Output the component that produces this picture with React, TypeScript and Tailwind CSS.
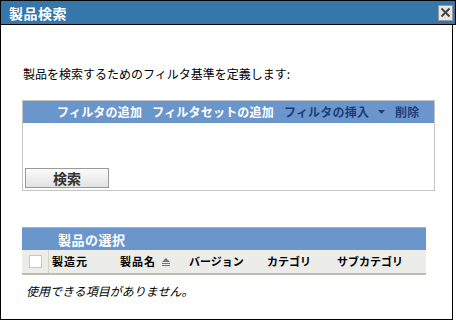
import React from "react";

const jp = { fontFamily: '"MS UI Gothic", "Noto Sans CJK JP", sans-serif' };

export default function App() {
  return (
    <div className="w-[456px] h-[320px] bg-white relative overflow-hidden" style={jp}>
      <div className="flex h-[25px] w-[456px] items-center justify-between border-t border-r border-l border-b border-black bg-[#3576ab] pl-[8px] pr-[2px]">
        <span className="text-[14px] font-bold leading-none tracking-[0.5px] text-white">製品検索</span>
        <div className="flex h-[16px] w-[15px] items-center justify-center border border-[#9a9a9a] bg-[#e6e6e6]">
          <svg width="11" height="11" viewBox="0 0 11 11">
            <path d="M1.5 1.5 L9.5 9.5 M9.5 1.5 L1.5 9.5" stroke="#444" strokeWidth="2" />
          </svg>
        </div>
      </div>
      <div className="flex h-[295px] w-[453px] flex-col border-l border-r border-b border-black">
        <div className="mt-[42px] pl-[22px] text-[12px] leading-[14px] text-black">
          製品を検索するためのフィルタ基準を定義します:
        </div>
        <div className="ml-[21px] mt-[19px] flex h-[91px] w-[413px] flex-col border border-[#c4c4c4]">
          <div className="flex h-[22px] items-center bg-[#6b96cc] pl-[34px] text-[12px] font-bold leading-none tracking-[0.2px]">
            <span className="text-white">フィルタの追加</span>
            <span className="ml-[10px] text-white">フィルタセットの追加</span>
            <span className="ml-[10px] text-[#1e3d7d]">フィルタの挿入</span>
            <svg className="ml-[9px]" width="7" height="4" viewBox="0 0 7 4">
              <path d="M0 0 H7 L3.5 4 Z" fill="#1e3d7d" />
            </svg>
            <span className="ml-[10px] text-[#1e3d7d]">削除</span>
          </div>
          <div className="flex-1" />
          <button className="mb-[2px] ml-[2px] flex h-[20px] w-[84px] items-center justify-center border border-[#9a9a9a] bg-gradient-to-b from-[#fbfbfb] to-[#e2e2e2] text-[14px] font-bold leading-none text-[#333]">
            検索
          </button>
        </div>
        <div className="ml-[21px] mt-[36px] w-[404px]">
          <div className="flex h-[23px] items-center border-t border-[#aab0a8] bg-[#6b96cc] pl-[36px] text-[13px] font-bold leading-none tracking-[0.5px] text-white">
            製品の選択
          </div>
          <div className="flex h-[25px] items-center border-b-2 border-[#bcbcb4] bg-[#ecece9] text-[11px] font-bold leading-none text-black">
            <div className="flex h-full w-[27px] items-center justify-center border-r border-[#d4d4cc]">
              <div className="h-[13px] w-[13px] border border-[#c8c8c0] bg-white" />
            </div>
            <span className="ml-[3px] w-[68px] tracking-[1px]">製造元</span>
            <span className="tracking-[1px]">製品名</span>
            <svg className="ml-[6px]" width="8" height="8" viewBox="0 0 8 8">
              <path d="M4 0 L8 4 H0 Z" fill="#777" />
              <rect x="0" y="5" width="8" height="1" fill="#777" />
              <rect x="0" y="7" width="8" height="1" fill="#777" />
            </svg>
            <span className="ml-[19px] w-[78px]">バージョン</span>
            <span className="w-[70px]">カテゴリ</span>
            <span>サブカテゴリ</span>
          </div>
        </div>
        <div className="ml-[25px] mt-[9px] text-[12px] italic leading-[14px] text-black">
          使用できる項目がありません。
        </div>
      </div>
    </div>
  );
}
